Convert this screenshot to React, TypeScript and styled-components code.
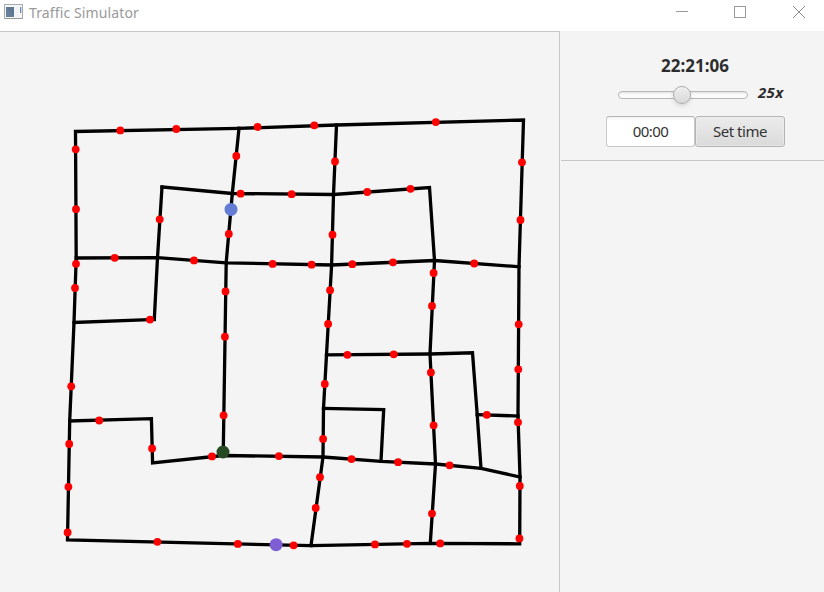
import React from 'react';
import styled, { createGlobalStyle } from 'styled-components';

const GlobalStyle = createGlobalStyle`
  * { box-sizing: border-box; }
  html, body { margin: 0; height: 100%; overflow: hidden; }
  body { background: #f4f4f4; font-family: "Noto Sans", "Open Sans", sans-serif; }
`;

const Window = styled.div`
  display: flex;
  flex-direction: column;
  width: 824px;
  height: 592px;
  overflow: hidden;
  background: #f4f4f4;
`;

const TitleBar = styled.header`
  display: flex;
  align-items: flex-start;
  height: 31px;
  flex: none;
  background: #fff;
  padding-left: 4px;
`;

const AppIcon = styled.svg`
  margin-top: 4px;
  flex: none;
`;

const Title = styled.span`
  margin-left: 6px;
  font-size: 14px;
  line-height: 20px;
  margin-top: 3px;
  letter-spacing: 0.12px;
  color: #999;
  white-space: nowrap;
`;

const WindowButtons = styled.div`
  display: flex;
  margin-left: auto;
  margin-right: -4px;
`;

const WindowButton = styled.button`
  width: 58.5px;
  height: 24px;
  padding: 0;
  border: 0;
  background: none;
  display: flex;
  align-items: center;
  justify-content: center;
`;

const Content = styled.main`
  display: flex;
  flex: 1;
  min-height: 0;
`;

const MapPane = styled.section`
  width: 560px;
  flex: none;
  border-top: 1px solid #c8c8c8;
  border-right: 1px solid #c8c8c8;
`;

const MapCanvas = styled.svg`
  display: block;
`;

const Sidebar = styled.aside`
  flex: 1;
  padding-left: 1px;
`;

const Controls = styled.div`
  display: flex;
  flex-direction: column;
  height: 130px;
  border-bottom: 1px solid #c8c8c8;
  padding-top: 23px;
`;

const Clock = styled.div`
  margin-left: 100px;
  height: 23px;
  line-height: 23px;
  font-size: 17px;
  font-weight: 700;
  color: #2d2d2d;
`;

const SpeedRow = styled.div`
  display: flex;
  height: 32px;
  padding-left: 57px;
`;

const Slider = styled.div`
  width: 130px;
  height: 8px;
  margin-top: 14px;
  border: 1px solid #b7b7b7;
  border-radius: 4px;
  background: linear-gradient(#e3e3e3, #fafafa 40%, #fcfcfc);
  display: flex;
  align-items: center;
`;

const Thumb = styled.div`
  width: 18px;
  height: 18px;
  flex: none;
  border: 1px solid #acacac;
  border-radius: 50%;
  margin-left: 54px;
  background: linear-gradient(#ededed, #dadada);
  box-shadow: 0 2px 4px rgba(0, 0, 0, 0.12), inset 0 1px 0 #f7f7f7;
`;

const Speed = styled.span`
  margin: 5px 0 0 10px;
  font-size: 15px;
  line-height: 20px;
  font-weight: 700;
  font-style: italic;
  letter-spacing: 0.3px;
  color: #2d2d2d;
`;

const TimeRow = styled.div`
  display: flex;
  margin: 7px 0 0 45px;
`;

const TimeInput = styled.input`
  width: 89px;
  height: 31px;
  padding: 0 0 2px;
  border: 1px solid #c8c8c8;
  border-top-color: #b4b4b4;
  border-radius: 3px;
  background: linear-gradient(#f3f3f3, #fff 4px);
  text-align: center;
  font: 15px "Noto Sans", sans-serif;
  letter-spacing: -0.6px;
  color: #333;
  outline: 0;
`;

const SetButton = styled.button`
  width: 90px;
  height: 31px;
  padding: 0 0 2px;
  border: 1px solid #b5b5b5;
  border-radius: 3px;
  background: linear-gradient(#ececec, #dadada);
  box-shadow: inset 0 0 0 1px #f0f0f088;
  font: 15px "Noto Sans", sans-serif;
  letter-spacing: -0.45px;
  color: #333;
`;

type Point = [number, number];

const roads: Point[][] = [
  [[75.5, 131.5], [239, 128.3], [336.5, 125], [523.5, 120], [519, 266.7], [518, 416], [520, 477], [519.7, 543.8], [430.3, 543.3], [311, 545.7], [67.5, 540], [69.7, 421], [74, 322.5], [76.2, 258], [75.5, 131.5]],
  [[239, 128.3], [232.3, 193.5], [226.2, 262.5], [223.2, 455.5]],
  [[336.5, 125], [333.5, 194.5], [331.6, 265], [326.5, 354.8], [323.5, 408.5], [323, 457], [311, 545.7]],
  [[162, 187], [232.3, 193.5], [333.5, 194.5], [429.5, 187.5], [434.5, 260.5], [430, 354], [435.5, 464], [430.3, 543.3]],
  [[162, 187], [157.5, 257.6], [154.3, 319.5]],
  [[76.2, 258], [157.5, 257.6], [226.2, 262.8], [331.6, 265], [434.5, 260.5], [519, 266.7]],
  [[74, 322.5], [154.3, 319.5]],
  [[326.5, 354.8], [430, 354], [472.5, 352.8], [477.2, 414.6], [481, 468.3]],
  [[477.2, 414.6], [518, 416]],
  [[323.5, 408.5], [383.7, 409.5], [381, 461]],
  [[69.7, 421], [151.4, 418.7], [152.6, 463], [223.2, 455.5], [323, 457], [381, 461.3], [435.5, 464], [481, 468.3], [520, 477]],
];

const signals: Point[] = [
  [120.3, 130.4], [176.3, 129], [257.5, 127], [314.3, 125.3], [435.8, 122.1],
  [75.7, 149.3], [236.3, 156], [335, 161.5], [522, 162.3],
  [240.6, 193.7], [291.6, 194.2], [367.3, 192], [410.5, 188.8],
  [76, 209.2], [159.7, 219.3], [520.5, 220], [228.8, 234], [332.5, 234.7],
  [114.7, 257.8], [194, 260.4], [272.6, 263.9], [311.6, 264.7], [352.3, 264.2], [393, 262.3], [474.2, 263.5],
  [76, 263.8], [75, 288], [433.6, 273], [225.5, 291.4], [330.1, 290.2], [432, 306],
  [150, 319.6], [328.1, 324], [518.7, 324.3], [224.9, 336.7],
  [347.4, 354.8], [393.7, 354.3], [518.3, 369.3], [430.9, 372.4], [71.2, 386.3], [324.8, 384],
  [223.6, 415.3], [486.8, 414.8], [99.2, 420.5], [518, 422.3], [433.6, 425.3],
  [323.1, 438.9], [69.2, 444], [152.1, 448.4], [212, 456.4], [278.9, 456.1],
  [351.5, 459.1], [398.1, 462.2], [449.6, 465.3], [320, 477.2], [68.4, 486.8], [519.8, 486],
  [315.7, 508], [432, 513.6], [67.6, 532.5], [519.4, 538.4],
  [157.4, 541.8], [237.8, 543.9], [293.6, 545.3], [375, 544.4], [407, 543.8], [440.2, 543.4],
];

const vehicles: { at: Point; color: string }[] = [
  { at: [231, 209.4], color: '#637dd4' },
  { at: [223, 452], color: '#264b24' },
  { at: [276.1, 544.7], color: '#7d5fd3' },
];

export default function App() {
  return (
    <>
      <GlobalStyle />
      <Window>
        <TitleBar>
          <AppIcon width="19" height="15" viewBox="0 0 19 15">
            <rect x=".5" y=".5" width="18" height="14" fill="#f5f6f8" stroke="#a9a9a9" />
            <path d="M1 14.5h17.5" stroke="#999" />
            <rect x="2" y="3" width="8" height="10" fill="#66809c" />
            <path d="M2 3h8v10z" fill="#587088" opacity=".6" />
            <rect x="11" y="3" width="4" height="10" fill="#f0f2f5" />
            <rect x="16" y="3" width="1.3" height="6" fill="#6f8bb0" />
          </AppIcon>
          <Title>Traffic Simulator</Title>
          <WindowButtons>
            <WindowButton aria-label="Minimize">
              <svg width="12" height="12"><path d="M0 5.5h12" stroke="#999" /></svg>
            </WindowButton>
            <WindowButton aria-label="Maximize">
              <svg width="12" height="12"><rect x=".5" y=".5" width="11" height="11" fill="none" stroke="#999" /></svg>
            </WindowButton>
            <WindowButton aria-label="Close">
              <svg width="12" height="12"><path d="M0 0l12 12M12 0L0 12" stroke="#8c8c8c" /></svg>
            </WindowButton>
          </WindowButtons>
        </TitleBar>
        <Content>
          <MapPane>
            <MapCanvas width="559" height="560" viewBox="0 32 559 560">
              <g fill="none" stroke="#000" strokeWidth="3.3" strokeLinecap="square">
                {roads.map((road, i) => (
                  <polyline key={i} points={road.map((p) => p.join(',')).join(' ')} />
                ))}
              </g>
              <g fill="#f00">
                {signals.map(([x, y], i) => (
                  <circle key={i} cx={x} cy={y} r="3.9" />
                ))}
              </g>
              {vehicles.map(({ at, color }) => (
                <circle key={color} cx={at[0]} cy={at[1]} r="6.5" fill={color} />
              ))}
            </MapCanvas>
          </MapPane>
          <Sidebar>
            <Controls>
              <Clock>22:21:06</Clock>
              <SpeedRow>
                <Slider>
                  <Thumb />
                </Slider>
                <Speed>25x</Speed>
              </SpeedRow>
              <TimeRow>
                <TimeInput defaultValue="00:00" />
                <SetButton>Set time</SetButton>
              </TimeRow>
            </Controls>
          </Sidebar>
        </Content>
      </Window>
    </>
  );
}
